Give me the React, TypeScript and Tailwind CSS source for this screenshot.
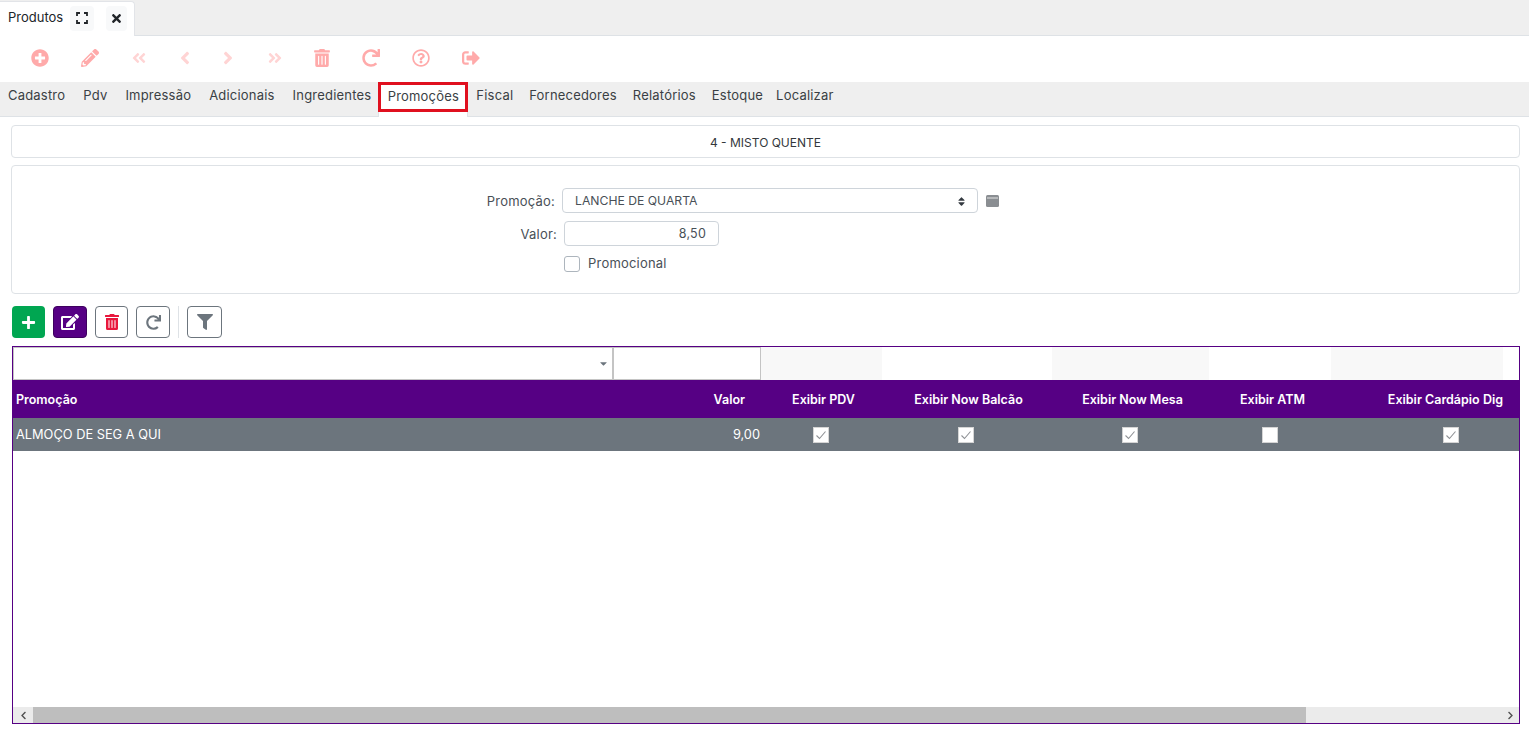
import React from "react";
import { FaPlusCircle, FaPencilAlt, FaAngleDoubleLeft, FaAngleLeft, FaAngleRight, FaAngleDoubleRight, FaTrashAlt, FaRedo, FaRegQuestionCircle, FaSignOutAlt, FaPlus, FaEdit, FaFilter, FaTimes, FaSort, FaCaretDown, FaChevronLeft, FaChevronRight } from "react-icons/fa";

const tabs = ["Cadastro", "Pdv", "Impressão", "Adicionais", "Ingredientes"];
const tabs2 = ["Fiscal", "Fornecedores", "Relatórios", "Estoque"];

function Check({ on }: { on: boolean }) {
  return (
    <span className="w-4 h-4 bg-white border border-[#d5d5d5] flex items-center justify-center">
      {on && (
        <svg width="12" height="12" viewBox="0 0 12 12" fill="none" stroke="#8f9296" strokeWidth="1.1">
          <path d="M1.5 6.5 L4.5 9.5 L10.5 2.5" />
        </svg>
      )}
    </span>
  );
}

export default function App() {
  return (
    <div className="h-[734px] w-[1529px] overflow-hidden bg-white flex flex-col text-[13px] text-[#212529] font-['Inter','Liberation_Sans',sans-serif]">
      <div className="h-9 shrink-0 bg-[#efefef] border-b border-[#dee2e6] flex items-end">
        <div className="h-[35px] w-[135px] -mb-px bg-white border-r border-t border-[#e2e4e8] rounded-tr flex items-center pl-2 pb-[2px]">
          <span className="w-[62px] text-[13px] text-[#212529]">Produtos</span>
          <span className="w-6 h-[25px] rounded bg-[#f8f9fa] flex items-center justify-center">
            <svg width="12" height="12" viewBox="0 0 12 12" fill="none" stroke="#212529" strokeWidth="1.8">
              <path d="M1 4V1H4M8 1H11V4M11 8V11H8M4 11H1V8" />
            </svg>
          </span>
          <span className="ml-3 w-[21px] h-[25px] rounded bg-[#f8f9fa] flex items-center justify-center">
            <FaTimes className="text-[13px] text-[#212529]" />
          </span>
        </div>
      </div>

      <div className="h-[46px] shrink-0 flex items-center text-[#ffaaaa] pb-[2px]">
        <div className="w-[31px]" />
        <div className="w-[18px] flex justify-center"><FaPlusCircle className="text-[18px]" /></div>
        <div className="w-[32px]" />
        <div className="w-[18px] flex justify-center"><FaPencilAlt className="text-[18px]" /></div>
        <div className="w-[32px]" />
        <div className="w-[16px] flex justify-center text-[#ffd4d4]"><FaAngleDoubleLeft className="text-[16px]" /></div>
        <div className="w-[32px]" />
        <div className="w-[12px] flex justify-center text-[#ffd4d4]"><FaAngleLeft className="text-[20px]" /></div>
        <div className="w-[31px]" />
        <div className="w-[12px] flex justify-center text-[#ffd4d4]"><FaAngleRight className="text-[20px]" /></div>
        <div className="w-[33px]" />
        <div className="w-[16px] flex justify-center text-[#ffd4d4]"><FaAngleDoubleRight className="text-[16px]" /></div>
        <div className="w-[31px]" />
        <div className="w-[16px] flex justify-center"><FaTrashAlt className="text-[18px]" /></div>
        <div className="w-[32px]" />
        <div className="w-[18px] flex justify-center"><FaRedo className="text-[18px]" /></div>
        <div className="w-[32px]" />
        <div className="w-[18px] flex justify-center"><FaRegQuestionCircle className="text-[18px]" /></div>
        <div className="w-[32px]" />
        <div className="w-[18px] flex justify-center"><FaSignOutAlt className="text-[18px]" /></div>
      </div>

      <div className="h-[35px] shrink-0 bg-[#efefef] border-b border-[#dee2e6] flex items-start pl-2 text-[13px] tracking-[0.2px] text-[#3a3f44] leading-[27px]">
        {tabs.map((t) => (
          <span key={t} className="mr-[18px]">{t}</span>
        ))}
        <span className="relative -ml-[11px] mr-2 h-[35px] w-[90px] -mb-px bg-white border-x border-[#dee2e6]">
          <span className="absolute -left-px -right-px top-0 h-[30px] border-[3px] border-[#e0101f] flex items-center justify-center bg-white pb-[2px]">Promoções</span>
        </span>
        {tabs2.map((t, i) => (
          <span key={t} className={i === 3 ? "mr-[13px]" : "mr-4"}>{t}</span>
        ))}
        <span>Localizar</span>
      </div>

      <div className="shrink-0 mt-2 ml-[11px] mr-[9px] h-[33px] border border-[#dee2e6] rounded flex items-center justify-center pt-[2px] text-[12px] text-[#33383d]">
        4 - MISTO QUENTE
      </div>

      <div className="shrink-0 mt-[7px] ml-[11px] mr-[9px] h-[129px] border border-[#dee2e6] rounded flex flex-col pt-[22px] text-[13px] tracking-[0.2px] text-[#495057]">
        <div className="flex items-center h-[25px]">
          <span className="w-[550px] text-right pr-[7px] pt-[2px]">Promoção:</span>
          <div className="w-[416px] h-[25px] border border-[#ced4da] rounded flex items-center pl-3 pr-[10px] pt-px justify-between text-[12.2px] tracking-normal">
            <span>LANCHE DE QUARTA</span>
            <FaSort className="text-[11px] text-[#343a40]" />
          </div>
          <svg className="ml-2" width="13" height="12" viewBox="0 0 13 12">
            <rect x="0" y="0" width="13" height="12" rx="1.5" fill="#8a8e92" />
            <rect x="1" y="2.5" width="11" height="1" fill="#e4e4e4" />
          </svg>
        </div>
        <div className="flex items-center h-[25px] mt-2">
          <span className="w-[552px] text-right pr-[7px] pt-[2px]">Valor:</span>
          <div className="w-[155px] h-[25px] border border-[#ced4da] rounded flex items-center justify-end pr-3 pt-[2px] text-[12.5px]">8,50</div>
        </div>
        <div className="flex items-center mt-2 pl-[552px]">
          <span className="w-4 h-4 border border-[#adb5bd] rounded-[3px] bg-white" />
          <span className="ml-2">Promocional</span>
        </div>
      </div>

      <div className="shrink-0 mt-3 ml-3 flex items-center h-8">
        <button className="w-[33px] h-8 rounded bg-[#00a651] text-white flex items-center justify-center"><FaPlus className="text-[15px]" /></button>
        <button className="ml-2 w-[34px] h-8 rounded bg-[#560084] text-white flex items-center justify-center border border-[#3e005f]"><FaEdit className="text-[18px]" /></button>
        <button className="ml-2 w-[33px] h-8 rounded bg-white text-[#e8173c] border border-[#6c757d] flex items-center justify-center"><FaTrashAlt className="text-[16px]" /></button>
        <button className="ml-2 w-[34px] h-8 rounded bg-white text-[#6c757d] border border-[#6c757d] flex items-center justify-center"><FaRedo className="text-[15px]" /></button>
        <span className="ml-2 w-px h-8 bg-[#dee2e6]" />
        <button className="ml-2 w-[35px] h-8 rounded bg-white text-[#6c757d] border border-[#6c757d] flex items-center justify-center"><FaFilter className="text-[16px]" /></button>
      </div>

      <div className="shrink-0 mt-2 ml-3 mr-[9px] h-[378px] border border-[#560084] flex flex-col overflow-hidden">
        <div className="h-[33px] shrink-0 flex">
          <div className="w-[601px] border border-[#c4c4c4] border-r-2 flex items-center justify-end pr-[3px]">
            <FaCaretDown className="text-[11px] text-[#6c757d]" />
          </div>
          <div className="w-[147px] border border-l-0 border-[#c4c4c4]" />
          <div className="w-[121px] bg-[#f8f8f8]" />
          <div className="w-[170px]" />
          <div className="w-[157px] bg-[#f8f8f8]" />
          <div className="w-[122px]" />
          <div className="w-[172px] bg-[#f8f8f8]" />
        </div>
        <div className="h-[38px] shrink-0 bg-[#560084] text-white font-semibold text-[12.5px] pt-[3px] flex items-center">
          <div className="w-[600px] shrink-0 pl-[3px]">Promoção</div>
          <div className="w-[132px] shrink-0 text-right">Valor</div>
          <div className="w-[157px] shrink-0 text-center">Exibir PDV</div>
          <div className="w-[133px] shrink-0 text-center">Exibir Now Balcão</div>
          <div className="w-[195px] shrink-0 text-center">Exibir Now Mesa</div>
          <div className="w-[85px] shrink-0 text-center">Exibir ATM</div>
          <div className="w-[188px] shrink-0 text-right">Exibir Cardápio Dig</div>
        </div>
        <div className="h-[33px] shrink-0 bg-[#6c757d] text-white text-[12.8px] flex items-center">
          <div className="w-[600px] shrink-0 pl-[3px]">ALMOÇO DE SEG A QUI</div>
          <div className="w-[147px] shrink-0 text-right">9,00</div>
          <div className="w-[122px] shrink-0 flex justify-center"><Check on /></div>
          <div className="w-[168px] shrink-0 flex justify-center"><Check on /></div>
          <div className="w-[160px] shrink-0 flex justify-center"><Check on /></div>
          <div className="w-[120px] shrink-0 flex justify-center"><Check on={false} /></div>
          <div className="w-[242px] shrink-0 flex justify-center"><Check on /></div>
        </div>
        <div className="flex-1" />
        <div className="h-4 shrink-0 bg-[#ebebeb] flex items-center">
          <div className="w-5 h-4 flex items-center justify-center"><FaChevronLeft className="text-[9px] text-[#505050]" /></div>
          <div className="w-[1273px] h-4 bg-[#bebebe]" />
          <div className="flex-1" />
          <div className="w-[18px] h-4 flex items-center justify-center"><FaChevronRight className="text-[9px] text-[#505050]" /></div>
        </div>
      </div>
    </div>
  );
}
